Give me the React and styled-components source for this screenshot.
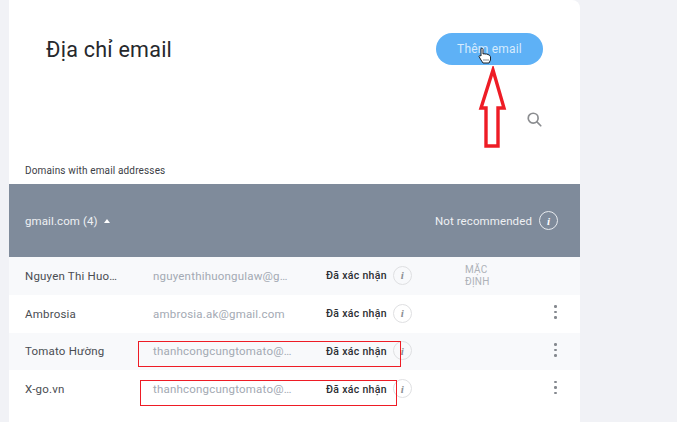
import React from 'react';
import styled, { createGlobalStyle } from 'styled-components';

const rows = [
    { name: 'Nguyen Thi Huo…', email: 'nguyenthihuongulaw@g…', isDefault: true, tint: true },
    { name: 'Ambrosia', email: 'ambrosia.ak@gmail.com' },
    { name: 'Tomato Hường', email: 'thanhcongcungtomato@…', tint: true },
    { name: 'X-go.vn', email: 'thanhcongcungtomato@…' },
];

const Global = createGlobalStyle`
    html, body {
        margin: 0;
        height: 100%;
        overflow: hidden;
        background: #f1f2f6;
        font-family: Roboto, "Noto Sans", sans-serif;
    }
`

const Page = styled.div`
    position: relative;
    width: 677px;
    height: 422px;
    overflow: hidden;
    background: #f1f2f6;
`

const Card = styled.main`
    width: 571px;
    height: 422px;
    margin-left: 9px;
    background: #fff;
    border-top-right-radius: 8px;
`

const Top = styled.header`
    display: flex;
    justify-content: space-between;
    align-items: center;
    height: 32px;
    padding: 33px 37px 0 37px;
`

const Title = styled.h1`
    margin: 0;
    font-size: 21.5px;
    font-weight: 400;
    letter-spacing: 0.25px;
    color: #26282c;
`

const AddButton = styled.button`
    width: 107px;
    height: 32px;
    padding: 0;
    border: none;
    border-radius: 16px;
    background: #5eb1f6;
    color: #d5ebfd;
    font-family: inherit;
    font-size: 12px;
    letter-spacing: 0.2px;
`

const SearchRow = styled.div`
    display: flex;
    justify-content: flex-end;
    padding: 47px 38px 0 0;
    height: 15px;
    color: #8b8d90;
`

const DomainLabel = styled.div`
    margin: 37px 0 0 16px;
    height: 14px;
    font-size: 10px;
    line-height: 14px;
    letter-spacing: 0.15px;
    color: #3c4046;
`

const Band = styled.div`
    display: flex;
    justify-content: space-between;
    align-items: center;
    height: 73px;
    margin-top: 6px;
    padding: 0 22px 0 16px;
    background: #7f8b9b;
    color: #eef0f3;
    font-size: 11.5px;
    letter-spacing: 0.1px;
`

const DomainName = styled.span`
    display: flex;
    align-items: center;
    gap: 6px;
`

const Caret = styled.i`
    width: 0;
    height: 0;
    border-left: 3.5px solid transparent;
    border-right: 3.5px solid transparent;
    border-bottom: 4px solid #fff;
`

const Warning = styled.span`
    display: flex;
    align-items: center;
    gap: 7px;
`

const Info = styled.span`
    display: flex;
    justify-content: center;
    align-items: center;
    width: 17px;
    height: 17px;
    margin-bottom: ${(p) => (p.$light ? '0' : '1px')};
    border: 1px solid ${(p) => (p.$light ? '#e8ebef' : '#dfe0e2')};
    border-radius: 50%;
    font-family: "Liberation Serif", serif;
    font-style: italic;
    font-weight: 700;
    font-size: 11px;
    color: ${(p) => (p.$light ? '#fff' : '#8b8f95')};
`

const Row = styled.div`
    display: grid;
    grid-template-columns: 128px 173px 67px 72px 1fr 26px;
    align-items: center;
    height: 37.75px;
    padding-left: 16px;
    background: ${(p) => (p.$tint ? '#f8f9fb' : '#fff')};
    font-size: 11.5px;
    letter-spacing: 0.2px;
`

const Name = styled.span`
    color: #4a4d52;
    white-space: nowrap;
`

const Email = styled.span`
    color: #a3a9b3;
    white-space: nowrap;
`

const Status = styled.strong`
    font-size: 10.5px;
    font-weight: 500;
    letter-spacing: 0.3px;
    color: #2c2e32;
    white-space: nowrap;
`

const DefaultTag = styled.span`
    font-size: 10px;
    line-height: 12px;
    color: #aeb2b8;
`

const Dots = styled.span`
    display: flex;
    flex-direction: column;
    gap: 3px;
    width: 3px;
    margin-bottom: 3px;
    i {
        width: 2.5px;
        height: 2.5px;
        border-radius: 50%;
        background: #85898f;
    }
`

// marcas desenhadas por cima do print
const RedBox = styled.div`
    position: absolute;
    left: ${(p) => p.$x}px;
    top: ${(p) => p.$y}px;
    width: ${(p) => p.$w}px;
    height: 24px;
    border: 1px solid #ee1c25;
`

const Arrow = styled.svg`
    position: absolute;
    left: 478px;
    top: 66px;
`

const Hand = styled.svg`
    position: absolute;
    left: 478px;
    top: 47px;
`

function App() {
    return (
        <Page>
            <Global />
            <Card>
                <Top>
                    <Title>Địa chỉ email</Title>
                    <AddButton>Thêm email</AddButton>
                </Top>
                <SearchRow>
                    <svg width="15" height="15" viewBox="0 0 17 17" fill="none" stroke="currentColor" strokeWidth="1.9">
                        <circle cx="7" cy="7" r="5.6" />
                        <path d="M11 11l4.6 4.6" strokeLinecap="round" />
                    </svg>
                </SearchRow>
                <DomainLabel>Domains with email addresses</DomainLabel>
                <Band>
                    <DomainName>gmail.com (4) <Caret /></DomainName>
                    <Warning>Not recommended <Info $light>i</Info></Warning>
                </Band>
                {rows.map((row) => (
                    <Row key={row.name} $tint={row.tint}>
                        <Name>{row.name}</Name>
                        <Email>{row.email}</Email>
                        <Status>Đã xác nhận</Status>
                        <Info>i</Info>
                        {row.isDefault ? <DefaultTag>MẶC<br />ĐỊNH</DefaultTag> : <span />}
                        {row.isDefault ? <span /> : <Dots><i /><i /><i /></Dots>}
                    </Row>
                ))}
            </Card>
            <RedBox $x={138} $y={341} $w={261} />
            <RedBox $x={140} $y={380} $w={255} />
            <Arrow width="30" height="84" viewBox="0 0 30 84" fill="none">
                <path d="M15 4L3 42H8V80H20V42H26Z" stroke="#ee1c25" strokeWidth="3.4" />
            </Arrow>
            <Hand width="14" height="17" viewBox="0 0 14 17">
                <path d="M3 1.5c1-.6 2 0 2 1V7l1-.3 1 .3 1.5 0 1.5.5 1.5.7 1 1.5V13l-1.5 3H5L3 13 1 9.5c0-1 1-1.2 2-.5V2z" fill="#fff" stroke="#1f2328" strokeWidth="1" />
                <path d="M6 12v2M8 12v2M10 12v2" stroke="#6b7076" strokeWidth=".8" />
            </Hand>
        </Page>
    );
}

export default App;
